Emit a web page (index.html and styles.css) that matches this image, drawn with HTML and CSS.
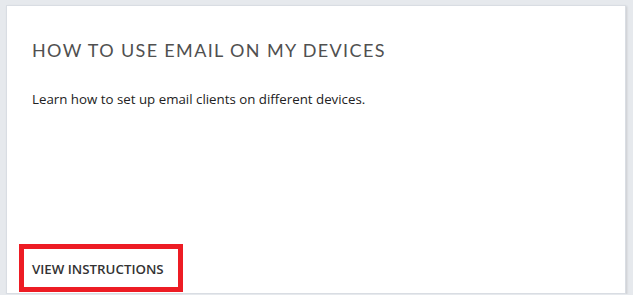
FILE: index.html
```html
<!DOCTYPE html>
<html lang="en">
<head>
    <meta charset="UTF-8">
    <title>Email on devices</title>
    <link rel="stylesheet" href="styles.css">
</head>
<body>
    <div class="card">
        <h2 class="card-title">HOW TO USE EMAIL ON MY DEVICES</h2>
        <p class="card-text">Learn how to set up email clients on different devices.</p>
        <div class="card-footer">
            <a class="card-link" href="#">VIEW INSTRUCTIONS</a>
        </div>
    </div>
</body>
</html>
```

FILE: styles.css
```css
body {
    margin: 0;
    background: #e6e9ed;
    font-family: 'Open Sans', Arial, sans-serif;
    padding: 5px 7px 0 6px;
}

.card {
    background: #fff;
    border: 1px solid #d9dde3;
    box-shadow: 1px 1px 2px rgba(0, 0, 0, 0.12);
    height: 289px;
    box-sizing: border-box;
    padding: 0 0 0 12px;
    display: flex;
    flex-direction: column;
}

.card-title {
    margin: 33px 0 0 13px;
    font-family: Lato, sans-serif;
    font-weight: 400;
    font-size: 18px;
    letter-spacing: 1.35px;
    color: #505050;
}

.card-text {
    margin: 29px 0 0 13px;
    font-size: 13.3px;
    color: #222;
}

.card-footer {
    margin-top: auto;
    margin-bottom: 1px;
    display: flex;
}

.card-link {
    display: block;
    border: 5px solid #ed1c24;
    padding: 11px 14px 9px 8px;
    font-size: 13.3px;
    font-weight: 600;
    color: #333;
    text-decoration: none;
}
```
